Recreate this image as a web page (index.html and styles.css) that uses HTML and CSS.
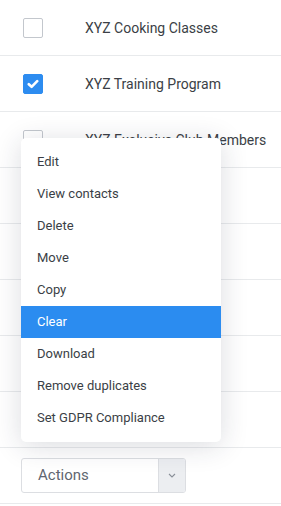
FILE: index.html
```html
<!DOCTYPE html>
<html>
<head>
<meta charset="utf-8">
<link rel="stylesheet" href="styles.css">
</head>
<body>
<div class="page">
  <div class="row"><span class="cb"></span><span class="label">XYZ Cooking Classes</span></div>
  <div class="row"><span class="cb checked"><svg width="12" height="10" viewBox="0 0 12 10"><polyline points="1.8,5.2 4.6,7.8 10.2,2.2" fill="none" stroke="#fff" stroke-width="2.6" stroke-linecap="round" stroke-linejoin="round"/></svg></span><span class="label">XYZ Training Program</span></div>
  <div class="row"><span class="cb"></span><span class="label">XYZ Exclusive Club Members</span></div>
  <div class="row"></div>
  <div class="row"></div>
  <div class="row"></div>
  <div class="row"></div>
  <div class="row"></div>
  <div class="row footer">
    <div class="select">
      <span class="select-text">Actions</span>
      <span class="select-arrow"><svg width="8" height="5" viewBox="0 0 8 5"><polyline points="1,1 4,4 7,1" fill="none" stroke="#8a9099" stroke-width="1.1"/></svg></span>
    </div>
  </div>
  <ul class="menu">
    <li>Edit</li>
    <li>View contacts</li>
    <li>Delete</li>
    <li>Move</li>
    <li>Copy</li>
    <li class="active">Clear</li>
    <li>Download</li>
    <li>Remove duplicates</li>
    <li>Set GDPR Compliance</li>
  </ul>
</div>
</body>
</html>
```

FILE: styles.css
```css
html, body {
  margin: 0;
  padding: 0;
  background: #fff;
}
body {
  font-family: Roboto, "Liberation Sans", sans-serif;
  color: #3b3f46;
}
.page {
  position: relative;
  width: 281px;
  overflow: hidden;
}
.row {
  height: 55px;
  border-bottom: 1px solid #e8eaec;
  display: flex;
  align-items: center;
  box-sizing: content-box;
}
.cb {
  width: 18px;
  height: 18px;
  border: 1px solid #c3c7cd;
  border-radius: 2px;
  margin-left: 23px;
  margin-right: 42px;
  background: #fff;
  display: flex;
  align-items: center;
  justify-content: center;
}
.cb.checked {
  background: #2d8cf0;
  border-color: #2d8cf0;
}
.label {
  font-size: 14px;
  white-space: nowrap;
  color: #3b3f46;
}
.footer {
  align-items: center;
}
.select {
  margin-left: 21px;
  width: 163px;
  height: 33px;
  border: 1px solid #dcdee2;
  border-radius: 3px;
  display: flex;
  overflow: hidden;
}
.select-text {
  flex: 1;
  padding-left: 16px;
  font-size: 15px;
  line-height: 33px;
  color: #5f6670;
}
.select-arrow {
  width: 26px;
  border-left: 1px solid #dcdee2;
  background: #eceef1;
  display: flex;
  align-items: center;
  justify-content: center;
}
.menu {
  position: absolute;
  top: 138px;
  left: 21px;
  width: 200px;
  margin: 0;
  padding: 8px 0;
  list-style: none;
  background: #fff;
  border-radius: 5px;
  box-shadow: 0 4px 28px rgba(30, 40, 60, 0.16);
}
.menu li {
  height: 32px;
  line-height: 32px;
  padding-left: 16px;
  font-size: 13px;
  color: #3b3f46;
}
.menu li.active {
  background: #2b8cf0;
  color: #fff;
}
```
